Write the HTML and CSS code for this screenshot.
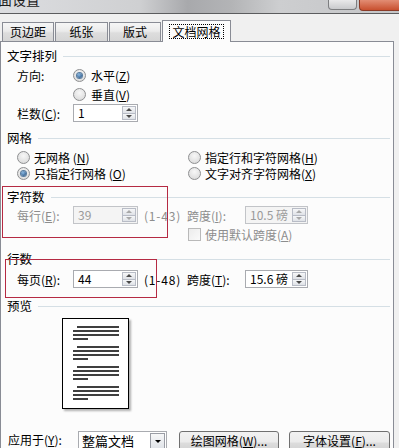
FILE: index.html
```html
<!DOCTYPE html>
<html lang="zh-CN">
<head>
  <meta charset="UTF-8">
  <meta name="viewport" content="width=device-width, initial-scale=1.0">
  <title>页面设置</title>
  <link rel="stylesheet" href="styles.css">
</head>
<body>
  <div class="dialog">
    <div class="titlebar">
      <span class="title">页面设置</span>
      <div class="caption">
        <span class="cap-btn"></span>
        <span class="cap-close"></span>
      </div>
    </div>

    <div class="tabs">
      <div class="tab t1">页边距</div>
      <div class="tab t2">纸张</div>
      <div class="tab t3">版式</div>
      <div class="tab active"><span class="focus">文档网格</span></div>
    </div>

    <div class="panel">
      <div class="head h-first"><span>文字排列</span></div>
      <div class="row r-dir">
        <span class="lbl">方向:</span>
        <span class="radio on"></span><span>水平(<u>Z</u>)</span>
      </div>
      <div class="row r-sub">
        <span class="radio"></span><span>垂直(<u>V</u>)</span>
      </div>
      <div class="row r-sub2">
        <span class="lbl">栏数(<u>C</u>):</span>
        <div class="spin"><span class="val">1</span><span class="arrows"><i class="up"></i><i class="down"></i></span></div>
      </div>

      <div class="head h-grid"><span>网格</span></div>
      <div class="row radio-row r-grid1">
        <div class="opt"><span class="radio"></span><span>无网格 (<u>N</u>)</span></div>
        <div class="opt"><span class="radio"></span><span>指定行和字符网格(<u>H</u>)</span></div>
      </div>
      <div class="row radio-row">
        <div class="opt"><span class="radio on"></span><span>只指定行网格 (<u>O</u>)</span></div>
        <div class="opt"><span class="radio"></span><span>文字对齐字符网格(<u>X</u>)</span></div>
      </div>

      <div class="head h-chars"><span>字符数</span></div>
      <div class="row r-sub disabled">
        <span class="lbl">每行(<u>E</u>):</span>
        <div class="spin off"><span class="val">39</span><span class="arrows"><i class="up"></i><i class="down"></i></span></div>
        <span class="range">(1-43)</span>
        <span class="lbl2">跨度(<u>I</u>):</span>
        <div class="spin off narrow"><span class="val">10.5 磅</span><span class="arrows"><i class="up"></i><i class="down"></i></span></div>
      </div>
      <div class="row r-sub r-check disabled">
        <span class="check"></span><span>使用默认跨度(<u>A</u>)</span>
      </div>

      <div class="head h-lines"><span>行数</span></div>
      <div class="row r-perpage">
        <span class="lbl">每页(<u>R</u>):</span>
        <div class="spin"><span class="val">44</span><span class="arrows"><i class="up"></i><i class="down"></i></span></div>
        <span class="range">(1-48)</span>
        <span class="lbl2">跨度(<u>T</u>):</span>
        <div class="spin narrow"><span class="val">15.6 磅</span><span class="arrows"><i class="up"></i><i class="down"></i></span></div>
      </div>

      <div class="head h-preview"><span>预览</span></div>
      <div class="preview">
        <svg width="65" height="89" viewBox="0 0 65 89">
          <g stroke="#000" stroke-width="1.3">
            <path d="M14 8H56M10 12H56M10 16H56M10 20H25"/>
            <path d="M14 28H56M10 32H56M10 36H56M10 40H25"/>
            <path d="M14 48H56M10 52H56M10 56H56M10 60H25"/>
            <path d="M14 68H56M10 72H56M10 76H56M10 80H25"/>
          </g>
        </svg>
      </div>

      <div class="row bottom">
        <span class="lbl-apply">应用于(<u>Y</u>):</span>
        <div class="select"><span class="val">整篇文档</span><span class="drop"><i class="down"></i></span></div>
        <button class="btn b1">绘图网格(<u>W</u>)...</button>
        <button class="btn b2">字体设置(<u>F</u>)...</button>
      </div>
    </div>

    <div class="mark mark-chars"></div>
    <div class="mark mark-lines"></div>
  </div>
</body>
</html>
```

FILE: styles.css
```css
html, body {
  margin: 0;
  background: #f0f0f0;
  color: #000;
  font-family: "Noto Sans CJK SC", "Liberation Sans", sans-serif;
  font-size: 12px;
}
.dialog {
  position: relative;
  width: 399px;
  height: 448px;
  overflow: hidden;
}
u {
  text-decoration: underline;
  text-underline-offset: 1px;
}

/* title bar */
.titlebar {
  height: 13px;
  border-bottom: 1px solid #5b5c5e;
  background: linear-gradient(90deg, #dcdde0 0%, #cfd0d2 35%, #a8a9ac 47%, #b3b4b6 58%, #cdced0 70%, #c4c5c7 100%);
  display: flex;
  justify-content: space-between;
  overflow: hidden;
}
.title {
  margin-left: -16px;
  margin-top: -10px;
  font-size: 14px;
  line-height: 18px;
  color: #1d1d1d;
}
.caption {
  display: flex;
  align-items: flex-start;
}
.cap-btn {
  width: 27px;
  height: 9px;
  margin-right: 2px;
  border: 1px solid #7d7e80;
  border-top: none;
  border-radius: 0 0 4px 4px;
  background: linear-gradient(#e9e9ea, #c9cacc);
}
.cap-close {
  width: 39px;
  height: 10px;
  border: 1px solid #8a3b28;
  border-top: none;
  border-right: none;
  border-radius: 0 0 0 4px;
  background: linear-gradient(#e28d74, #c8502f);
}

/* tabs */
.tabs {
  height: 27px;
  display: flex;
  align-items: flex-end;
  padding-left: 2px;
}
.tab {
  box-sizing: border-box;
  height: 19px;
  margin-right: 1px;
  border: 1px solid #898c95;
  border-bottom: none;
  background: linear-gradient(#f6f6f6, #ebebeb 45%, #dddddd 55%, #d5d5d5);
  display: flex;
  align-items: center;
  justify-content: center;
  line-height: 16px;
}
.t1 { width: 52px; }
.t2 { width: 53px; }
.t3 { width: 52px; margin-right: 1px; }
.tab.active {
  position: relative;
  z-index: 1;
  width: 69px;
  height: 22px;
  margin-bottom: -1px;
  background: #fcfcfc;
}
.focus {
  border: 1px dotted #000;
  padding: 0 2px;
  line-height: 13px;
}

/* panel */
.panel {
  box-sizing: border-box;
  width: 394px;
  height: 430px;
  border: 1px solid #898c95;
  background: #fcfcfc;
}
.head {
  display: flex;
  align-items: center;
  height: 18px;
  padding-left: 6px;
  padding-right: 3px;
  margin-top: 6px;
  font-size: 12.5px;
}
.head::after {
  content: "";
  flex: 1;
  border-top: 1px solid #d5dfe5;
  margin-left: 6px;
  margin-top: 2px;
}
.h-first { margin-top: 4px; }
.h-preview { margin-top: 8px; }

.row {
  display: flex;
  align-items: center;
  height: 18px;
  padding-left: 16px;
  white-space: nowrap;
}
.r-dir { margin-top: 2px; }
.r-sub, .r-sub2 { margin-top: 1px; }
.r-sub:not(.disabled):not(.r-check) { padding-left: 72px; }
.r-check { padding-left: 187px; }
.r-perpage { margin-top: 3px; }
.lbl {
  width: 56px;
}
.range {
  width: 43px;
  margin-left: 6px;
  letter-spacing: 0.8px;
}
.lbl2 {
  width: 58px;
}
.disabled {
  color: #8d8d8d;
}

.radio-row {
  height: 16px;
}
.r-grid1 { margin-top: 3px; }
.opt {
  display: flex;
  align-items: center;
  width: 171px;
}
.radio {
  box-sizing: border-box;
  width: 13px;
  height: 13px;
  margin-right: 4px;
  border-radius: 50%;
  border: 1px solid #8e8f91;
  background: radial-gradient(circle at 50% 35%, #f7f7f7, #d6d6d6);
  display: flex;
  align-items: center;
  justify-content: center;
}
.r-dir .radio, .r-sub .radio { margin-right: 5px; }
.radio.on::after {
  content: "";
  width: 5px;
  height: 5px;
  border-radius: 50%;
  background: radial-gradient(circle at 40% 35%, #8ab9e3, #1c4676);
  box-shadow: 0 0 0 1px #587c9f;
}
.check {
  box-sizing: border-box;
  width: 13px;
  height: 13px;
  margin-right: 4px;
  border: 1px solid #b9b9b9;
  background: linear-gradient(135deg, #ececec, #fafafa);
}

/* spin boxes */
.spin {
  box-sizing: border-box;
  width: 65px;
  height: 18px;
  border: 1px solid #a9abb0;
  background: #fff;
  display: flex;
}
.spin.narrow { width: 63px; }
.spin .val, .select .val {
  flex: 1;
  padding-left: 4px;
  line-height: 16px;
}
.arrows {
  width: 14px;
  margin: 1px;
  display: flex;
  flex-direction: column;
}
.arrows i, .drop {
  flex: 1;
  box-sizing: border-box;
  border: 1px solid #b8bcc6;
  background: linear-gradient(#f6f7f8, #dfe2e7);
  display: flex;
  align-items: center;
  justify-content: center;
}
.arrows i + i { border-top: none; }
.arrows .up::after {
  content: "";
  border-left: 3px solid transparent;
  border-right: 3px solid transparent;
  border-bottom: 3px solid #4a4a4a;
}
.arrows .down::after, .drop .down::after {
  content: "";
  display: block;
  border-left: 3px solid transparent;
  border-right: 3px solid transparent;
  border-top: 3px solid #4a4a4a;
}
.spin.off {
  border-color: #c2c4c8;
  background: #f4f4f4;
  color: #9a9a9a;
}
.spin.off .arrows i::after {
  border-top-color: #a8a8a8;
  border-bottom-color: #a8a8a8;
}
.spin.off .arrows .up::after { border-top-color: transparent; }
.spin.off .arrows .down::after { border-bottom-color: transparent; }

/* preview */
.preview {
  box-sizing: border-box;
  width: 67px;
  height: 91px;
  margin: 4px 0 0 61px;
  border: 1px solid #000;
  background: #fff;
  box-shadow: 2px 2px 2px rgba(0,0,0,0.3);
}
.preview svg { display: block; }

/* bottom row */
.bottom {
  margin-top: 21px;
  height: 23px;
  align-items: flex-start;
  padding-left: 7px;
}
.lbl-apply {
  width: 70px;
  line-height: 18px;
  padding-top: 1px;
}
.select {
  box-sizing: border-box;
  width: 89px;
  height: 21px;
  margin-top: 1px;
  border: 1px solid #a9abb0;
  background: #fff;
  display: flex;
  padding: 1px;
}
.select .val {
  font-size: 13px;
  line-height: 15px;
  padding-left: 2px;
}
.drop {
  flex: none;
  width: 15px;
  height: 17px;
  border-color: #9a9da5;
}
.drop .down::after {
  border-top-color: #000;
}
.btn {
  box-sizing: border-box;
  height: 23px;
  margin-top: 1px;
  padding: 0;
  border: 1px solid #707070;
  border-radius: 3px;
  background: linear-gradient(#f2f2f2, #ebebeb 48%, #dddddd 52%, #cfcfcf);
  font-family: inherit;
  font-size: 12px;
  color: #000;
  line-height: 17px;
  display: flex;
  justify-content: center;
}
.b1 { width: 100px; margin-left: 12px; }
.b2 { width: 101px; margin-left: 10px; }

/* red highlight boxes */
.mark {
  position: absolute;
  box-sizing: border-box;
  border: 1.5px solid #b52a43;
}
.mark-chars { left: 2px; top: 186px; width: 166px; height: 52px; }
.mark-lines { left: 5px; top: 259px; width: 152px; height: 39px; }
```
